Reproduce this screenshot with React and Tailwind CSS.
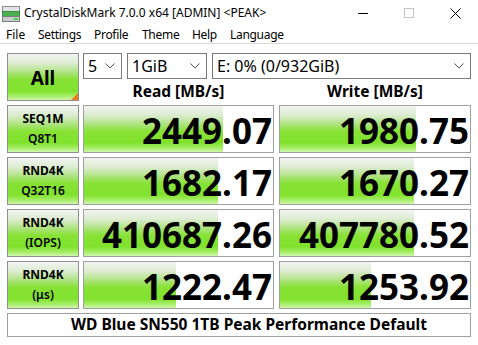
import React from "react";

const grad =
  "bg-[linear-gradient(to_bottom,#f2f4f0_0%,#dcecd0_20%,#ade37e_40%,#88e236_55%,#80e22c_80%,#a8ee6a_92%,#d2f7b0_100%)]";

function Chevron({ className = "" }) {
  return (
    <svg width="10" height="6" viewBox="0 0 10 6" className={className}>
      <path d="M0.5 0.5 L5 5 L9.5 0.5" fill="none" stroke="#555" strokeWidth="1" />
    </svg>
  );
}

function Select({ w, text }) {
  return (
    <div
      className={`${w} h-[26px] border border-[#7a7a7a] bg-white flex items-center justify-between pl-[4px] pr-[6px] text-[16px] text-black`}
    >
      <span className="leading-none">{text}</span>
      <Chevron />
    </div>
  );
}

function Row({ l1, l2, read, write, rw, ww }) {
  return (
    <div className="flex h-[48px] mt-[4px]">
      <div
        className={`w-[72px] h-full border border-[#8f8f8f] ${grad} flex flex-col items-center justify-center text-[12px] font-bold leading-[20px] text-black`}
      >
        <span>{l1}</span>
        <span className="font-semibold">{l2}</span>
      </div>
      <div className="w-[4px]" />
      <Cell w="w-[191px]" fill={rw} value={read} />
      <div className="w-[5px]" />
      <Cell w="w-[192px]" fill={ww} value={write} />
    </div>
  );
}

function Cell({ w, fill, value }) {
  return (
    <div className={`${w} h-full border border-[#a0a0a0] bg-white relative overflow-hidden`}>
      <div className={`absolute left-0 top-0 bottom-0 ${grad}`} style={{ width: fill }} />
      <div className="relative h-full flex items-center justify-end pr-[1px] pt-[3px] text-[35px] font-bold leading-none text-black">
        {value}
      </div>
    </div>
  );
}

export default function App() {
  return (
    <div
      className="w-[478px] h-[345px] bg-white overflow-hidden text-black"
      style={{ fontFamily: '"Noto Sans", "Open Sans", sans-serif' }}
    >
      {/* title bar */}
      <div className="h-[26px] flex items-center relative">
        <svg width="18" height="16" viewBox="0 0 18 16" className="ml-[2px] mt-[1px]">
          <rect x="0.5" y="0.5" width="17" height="5" fill="#dfe3e3" stroke="#8a9090" />
          <rect x="0.5" y="5.5" width="17" height="5" fill="#4cb050" stroke="#3c8c40" />
          <rect x="0.5" y="10.5" width="17" height="5" fill="#c8cccc" stroke="#7a8080" />
          <rect x="12" y="12" width="4" height="2" fill="#4cd050" />
        </svg>
        <span className="ml-[4px] text-[12px] leading-none">CrystalDiskMark 7.0.0 x64 [ADMIN] &lt;PEAK&gt;</span>
        <div className="absolute right-0 top-0 h-full flex items-center">
          <div className="w-[46px] h-full flex items-center justify-center">
            <div className="w-[10px] h-[1px] bg-black" />
          </div>
          <div className="w-[46px] h-full flex items-center justify-center">
            <div className="w-[10px] h-[10px] border border-[#c4c4c4]" />
          </div>
          <div className="w-[46px] h-full flex items-center justify-center">
            <svg width="11" height="11" viewBox="0 0 11 11">
              <path d="M0.5 0.5 L10.5 10.5 M10.5 0.5 L0.5 10.5" stroke="#000" strokeWidth="1" />
            </svg>
          </div>
        </div>
      </div>
      {/* menu bar */}
      <div className="h-[18px] flex items-center text-[12px] leading-none border-b border-[#d9d9d9] pl-[6px] pt-[1px]">
        <span className="w-[32px]">File</span>
        <span className="w-[56px] tracking-[-0.3px]">Settings</span>
        <span className="w-[48px] tracking-[-0.3px]">Profile</span>
        <span className="w-[50px] tracking-[-0.3px]">Theme</span>
        <span className="w-[38px] tracking-[-0.3px]">Help</span>
        <span className="tracking-[-0.3px]">Language</span>
      </div>
      <div className="px-[7px] pt-[9px]">
        <div className="flex">
          <div
            className={`w-[72px] h-[48px] border border-[#8f8f8f] ${grad} relative flex items-center justify-center text-[19px] font-bold leading-none`}
          >
            <span className="mt-[2px]">All</span>
            <svg width="7" height="7" viewBox="0 0 7 7" className="absolute right-0 bottom-0">
              <path d="M7 0 L7 7 L0 7 Z" fill="#f07a1a" />
            </svg>
          </div>
          <div className="w-[4px]" />
          <div className="flex flex-col">
            <div className="flex">
              <Select w="w-[39px]" text="5" />
              <div className="w-[5px]" />
              <Select w="w-[80px]" text="1GiB" />
              <div className="w-[5px]" />
              <Select w="w-[259px]" text="E: 0% (0/932GiB)" />
            </div>
            <div className="flex h-[22px] items-center text-[15.5px] font-bold leading-none">
              <div className="w-[191px] text-center pt-[4px]">Read [MB/s]</div>
              <div className="w-[5px]" />
              <div className="w-[192px] text-center pt-[4px]">Write [MB/s]</div>
            </div>
          </div>
        </div>
        <Row l1="SEQ1M" l2="Q8T1" read="2449.07" write="1980.75" rw={139} ww={136} />
        <Row l1="RND4K" l2="Q32T16" read="1682.17" write="1670.27" rw={134} ww={134} />
        <Row l1="RND4K" l2="(IOPS)" read="410687.26" write="407780.52" rw={134} ww={134} />
        <Row l1="RND4K" l2="(μs)" read="1222.47" write="1253.92" rw={92} ww={91} />
        <div className="mt-[4px] h-[24px] w-[464px] border border-[#a0a0a0] flex items-center justify-center pl-[20px] text-[15.5px] font-bold leading-none">
          WD Blue SN550 1TB Peak Performance Default
        </div>
      </div>
    </div>
  );
}
